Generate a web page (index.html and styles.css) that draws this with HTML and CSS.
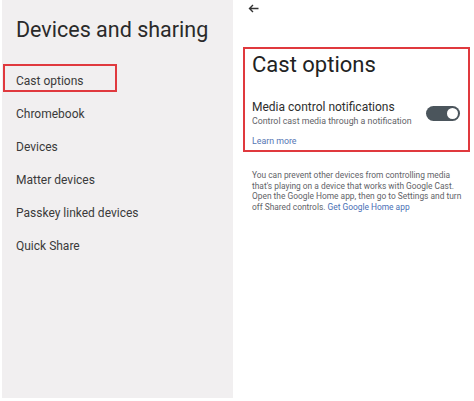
FILE: index.html
```html
<!DOCTYPE html>
<html lang="en">
	<head>
		<meta charset="UTF-8" />
		<meta name="viewport" content="width=device-width, initial-scale=1.0" />
		<title>Cast options</title>
		<link rel="stylesheet" href="styles.css">
	</head>
	<body>
		<div class="page">
			<aside class="sidebar">
				<h1 class="sidebar-title">Devices and sharing</h1>
				<nav class="menu">
					<a class="menu-item active" href="#">Cast options</a>
					<a class="menu-item" href="#">Chromebook</a>
					<a class="menu-item" href="#">Devices</a>
					<a class="menu-item" href="#">Matter devices</a>
					<a class="menu-item" href="#">Passkey linked devices</a>
					<a class="menu-item" href="#">Quick Share</a>
				</nav>
			</aside>
			<main class="detail">
				<button class="back" aria-label="Back">
					<svg width="11" height="9" viewBox="0 0 11 9">
						<path d="M10.5 4.5H1.5M5 1L1.5 4.5L5 8" fill="none" stroke="#333" stroke-width="1.4" />
					</svg>
				</button>
				<!-- the red frame marks the part that matters -->
				<section class="highlight">
					<h2 class="detail-title">Cast options</h2>
					<div class="setting">
						<div class="setting-text">
							<div class="setting-name">Media control notifications</div>
							<div class="setting-desc">Control cast media through a notification</div>
						</div>
						<span class="toggle on"><span class="knob"></span></span>
					</div>
					<a class="learn" href="#">Learn more</a>
				</section>
				<p class="note">
					You can prevent other devices from controlling media that's playing on a device that works with Google Cast. Open the Google Home app, then go to Settings and turn off Shared controls. <a href="#">Get Google Home app</a>
				</p>
			</main>
		</div>
	</body>
</html>
```

FILE: styles.css
```css
*,
*::before,
*::after {
	box-sizing: border-box;
}
body {
	font-family: Roboto, "Liberation Sans", sans-serif;
	margin: 0;
	background: #fff;
	color: #3a3a3a;
}
a {
	text-decoration: none;
}
.page {
	display: flex;
	width: 474px;
	height: 401px;
}
.sidebar {
	width: 231px;
	height: 398px;
	margin-left: 2px;
	background: #f1eff0;
}
.sidebar-title {
	margin: 0;
	padding: 17px 0 0 14px;
	font-size: 21.5px;
	line-height: 26px;
	font-weight: 400;
	color: #2a2a2a;
}
.menu {
	display: flex;
	flex-direction: column;
	margin-top: 22px;
}
.menu-item {
	position: relative;
	height: 33px;
	line-height: 33px;
	padding-left: 14px;
	font-size: 12px;
	color: #3a3a3a;
}
.menu-item.active::before {
	content: "";
	position: absolute;
	left: 1px;
	top: -1px;
	width: 114px;
	height: 28px;
	border: 2px solid #e0393e;
}
.detail {
	flex: 1;
	padding: 0 4px 0 10px;
}
.back {
	display: block;
	margin: 1px 0 0 5px;
	padding: 0;
	border: 0;
	background: none;
	height: 11px;
}
.highlight {
	margin-top: 35px;
	border: 2px solid #e0393e;
	padding: 3px 7px 3px 7px;
}
.detail-title {
	margin: 0;
	font-size: 22px;
	line-height: 26px;
	font-weight: 400;
	color: #222;
}
.setting {
	display: flex;
	align-items: center;
	justify-content: space-between;
	margin-top: 22px;
}
.setting-name {
	font-size: 12px;
	line-height: 15px;
	color: #2e2e2e;
}
.setting-desc {
	font-size: 8.8px;
	line-height: 12px;
	color: #5f6368;
}
.toggle {
	display: flex;
	align-items: center;
	justify-content: flex-end;
	width: 34px;
	height: 15px;
	margin-right: 1px;
	padding: 0 2px;
	border-radius: 8px;
	background: #4b555c;
}
.knob {
	width: 11px;
	height: 11px;
	border-radius: 50%;
	background: #fff;
}
.learn {
	display: block;
	margin-top: 8px;
	font-size: 8.8px;
	line-height: 12px;
	color: #5576b4;
}
.note {
	margin: 18px 0 0 9px;
	font-size: 8.4px;
	line-height: 10.5px;
	color: #5f6368;
}
.note a {
	color: #4a6fb5;
}
```
